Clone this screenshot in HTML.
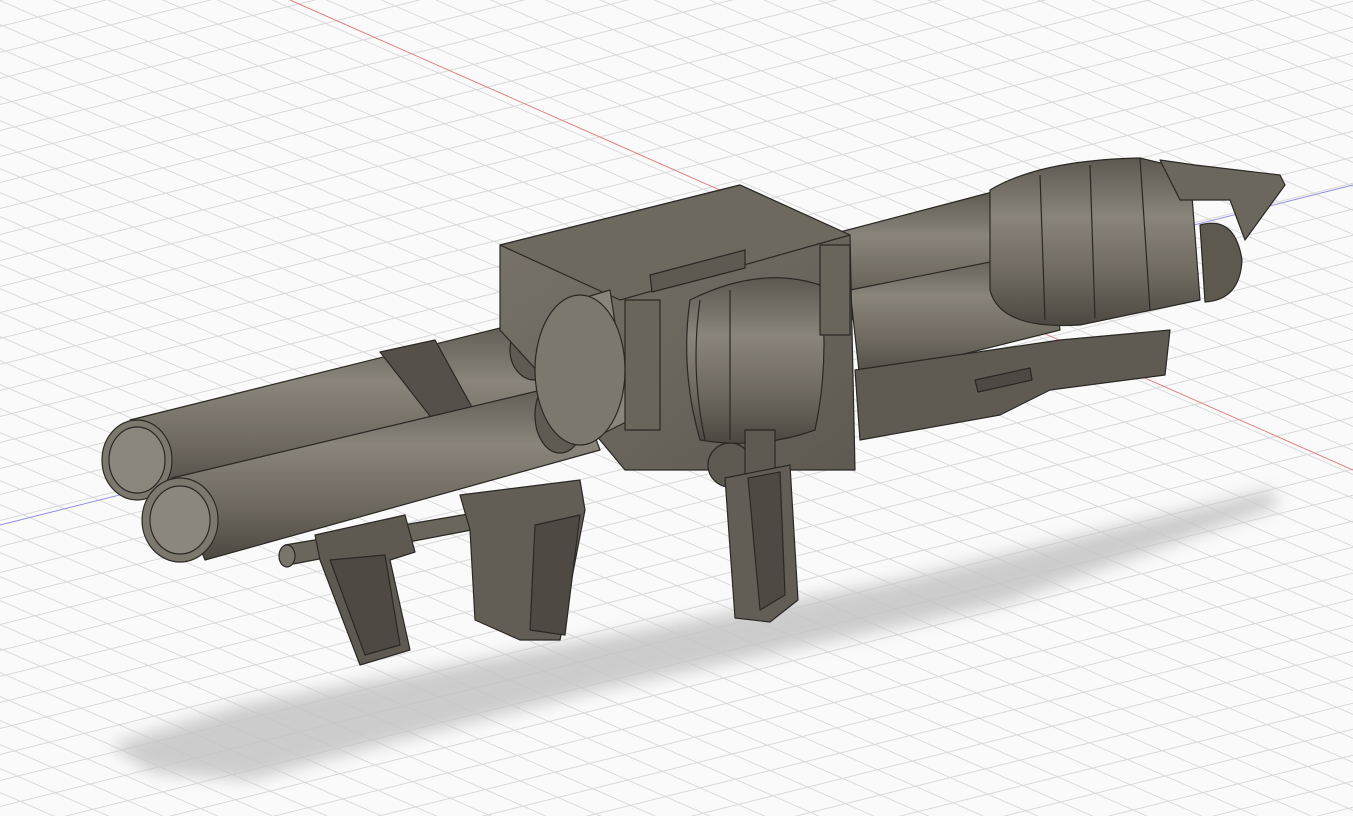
<!DOCTYPE html>
<html><head><meta charset="utf-8"><style>
html,body{margin:0;padding:0;background:#fafafa;overflow:hidden}
svg{display:block}
</style></head><body>
<svg width="1353" height="816" viewBox="0 0 1353 816" xmlns="http://www.w3.org/2000/svg">
<defs>
<pattern id="ga" width="40" height="24" patternUnits="userSpaceOnUse" patternTransform="skewY(23.7)">
<line x1="0" y1="0.5" x2="40" y2="0.5" stroke="#d8d8d8" stroke-width="1"/></pattern>
<pattern id="gb" width="40" height="26" patternUnits="userSpaceOnUse" patternTransform="skewY(-14)">
<line x1="0" y1="0.5" x2="40" y2="0.5" stroke="#d8d8d8" stroke-width="1"/></pattern>
<filter id="bl"><feGaussianBlur stdDeviation="8"/></filter>
<linearGradient id="tube" x1="0" y1="0" x2="0" y2="1">
<stop offset="0" stop-color="#5c5850"/><stop offset="0.35" stop-color="#8a857b"/><stop offset="0.7" stop-color="#6e695f"/><stop offset="1" stop-color="#4c4841"/></linearGradient>
<linearGradient id="body" x1="0" y1="0" x2="1" y2="1">
<stop offset="0" stop-color="#7a756b"/><stop offset="1" stop-color="#5e5a52"/></linearGradient>
</defs>
<rect width="1353" height="816" fill="#fafafa"/>
<rect width="1353" height="816" fill="url(#ga)"/>
<rect width="1353" height="816" fill="url(#gb)"/>
<line x1="290" y1="0" x2="1353" y2="470" stroke="#e08080" stroke-width="1"/>
<line x1="0" y1="525" x2="1353" y2="185" stroke="#8f8fe0" stroke-width="1"/>
<!-- shadow -->
<polygon filter="url(#bl)" fill="#c4c4c4" opacity="0.85" points="110,745 240,705 560,645 900,580 1270,490 1280,505 1000,605 600,690 380,745 250,780 150,772"/>
<g stroke="#2a2824" stroke-width="1.2" stroke-linejoin="round">
<!-- rear top tube -->
<polygon fill="url(#tube)" points="840,232 1000,190 1010,280 850,320"/>
<polygon fill="url(#tube)" points="850,290 1050,250 1060,330 860,380"/>
<!-- front assembly -->
<path fill="url(#tube)" d="M990,190 Q1040,160 1140,158 L1190,170 L1200,300 L1080,325 Q1000,330 990,290 Z"/>
<path fill="none" d="M1040,175 L1045,320 M1090,165 L1095,318 M1140,158 L1150,310"/>
<path fill="#5d594f" d="M1200,225 Q1235,215 1242,260 Q1240,300 1205,302 Z"/>
<polygon fill="#6c675d" points="1160,160 1195,165 1280,175 1285,185 1245,240 1230,200 1180,200"/>
<!-- lower rail -->
<polygon fill="#5f5b53" points="855,370 1060,340 1170,330 1165,375 1050,390 1000,415 860,440"/>
<polygon fill="#4e4a43" points="975,380 1030,368 1032,380 978,392"/>
<!-- left upper tube -->
<polygon fill="url(#tube)" points="130,420 540,318 560,395 165,500"/>
<ellipse cx="137" cy="460" rx="35" ry="40" fill="#7d786e"/>
<ellipse cx="137" cy="460" rx="28" ry="33" fill="#8c877d"/>
<polygon fill="#55514a" points="380,352 435,340 490,440 470,470 455,448"/>
<!-- left lower tube -->
<polygon fill="url(#tube)" points="172,478 575,382 600,450 205,560"/>
<ellipse cx="180" cy="520" rx="38" ry="42" fill="#7d786e"/>
<ellipse cx="180" cy="520" rx="30" ry="34" fill="#8c877d"/>
<ellipse cx="560" cy="415" rx="25" ry="38" fill="#5f5b53"/>
<ellipse cx="535" cy="350" rx="25" ry="30" fill="#5f5b53"/>
<!-- box -->
<polygon fill="url(#body)" points="500,245 740,185 850,235 855,470 625,470 600,440 500,330"/>
<polygon fill="#6e695f" points="500,245 740,185 850,235 620,300"/>
<polygon fill="#8a857a" points="560,305 610,290 630,420 580,445 545,400"/>
<ellipse cx="580" cy="370" rx="45" ry="75" fill="#7d786e"/>
<polygon fill="#5e5a52" points="650,275 745,250 745,268 652,292"/>
<!-- drum -->
<path fill="url(#tube)" d="M690,300 Q760,265 820,285 Q830,360 815,430 Q760,450 700,440 Q680,370 690,300 Z"/>
<path fill="none" d="M730,290 L730,440 M700,300 Q690,370 705,440"/>
<rect x="625" y="300" width="35" height="130" fill="#6a655b"/>
<rect x="820" y="245" width="30" height="90" fill="#6a655b"/>
<!-- gear -->
<circle cx="730" cy="465" r="22" fill="#5e5a52"/>
<rect x="745" y="430" width="30" height="45" fill="#5e5a52"/>
<!-- rod and front grip -->
<polygon fill="#6b665c" points="285,545 480,512 482,528 288,565"/>
<ellipse cx="287" cy="556" rx="8" ry="11" fill="#7a756b"/>
<polygon fill="#5e5a52" points="315,535 405,515 415,552 390,560 410,650 360,665 320,560"/>
<polygon fill="#4e4a43" points="330,560 385,555 400,645 365,655"/>
<!-- middle grip -->
<polygon fill="#625e55" points="460,495 580,480 585,510 560,640 520,640 475,620 470,530"/>
<polygon fill="#4e4a43" points="535,525 580,515 565,635 530,630"/>
<!-- rear grip -->
<polygon fill="#625e55" points="725,478 790,465 798,600 770,622 735,618"/>
<polygon fill="#4e4a43" points="748,478 780,472 785,595 760,610"/>
</g>
</svg>
</body></html>
